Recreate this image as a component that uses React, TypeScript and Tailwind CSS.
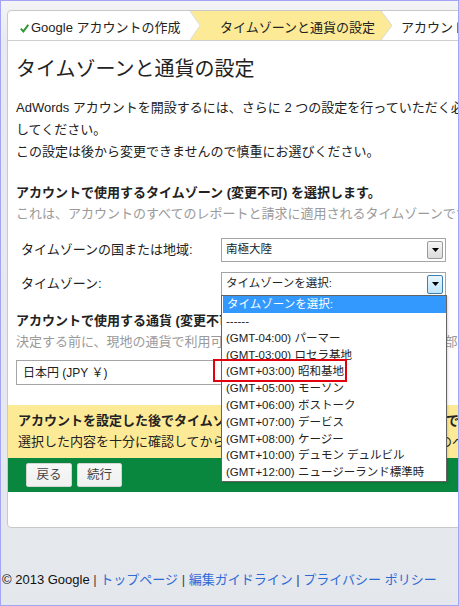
import React from "react";

function Arrow({ active }: { active?: boolean }) {
  return (
    <div
      className={
        active
          ? "w-[16px] h-[19px] flex items-center justify-center border border-[#3c7fb1] rounded-[2px] bg-[linear-gradient(#eaf6fd,#bee6fd)]"
          : "w-[16px] h-[18px] flex items-center justify-center border border-[#9a9a9a] rounded-[2px] bg-[linear-gradient(#f6f6f6,#dcdcdc)]"
      }
    >
      <svg width="7" height="4" viewBox="0 0 7 4">
        <polygon points="0,0 7,0 3.5,4" fill="#000" />
      </svg>
    </div>
  );
}

function Select({ text, active }: { text: string; active?: boolean }) {
  return (
    <div className="w-[225px] h-[24px] border border-[#a5a5a5] bg-white flex items-center justify-between pl-[4px] pr-[2px] text-[11.5px] text-[#222]">
      <span>{text}</span>
      <Arrow active={active} />
    </div>
  );
}

export default function App() {
  const items = [
    "------",
    "(GMT-04:00) パーマー",
    "(GMT-03:00) ロセラ基地",
    "(GMT+03:00) 昭和基地",
    "(GMT+05:00) モーソン",
    "(GMT+06:00) ボストーク",
    "(GMT+07:00) デービス",
    "(GMT+08:00) ケージー",
    "(GMT+10:00) デュモン デュルビル",
    "(GMT+12:00) ニュージーランド標準時",
  ];
  return (
    <div className="relative w-[459px] h-[606px] overflow-hidden border border-[#a4a4f4] bg-[linear-gradient(180deg,#f4f4f6_0px,#e7eaee_40px,#e4e7ec_100%)] font-['Liberation_Sans','Noto_Sans_CJK_JP',sans-serif] text-[#222]">
      <div className="ml-[6px] mt-[9px] w-[640px] h-[518px] bg-white border border-[#c9c9c9] rounded-[4px] overflow-hidden">
        {/* breadcrumb */}
        <div className="flex h-[30px] border-b border-[#cfcfcf] text-[13px] leading-[20px] whitespace-nowrap">
          <div className="w-[182px] pl-[12px] pt-[7px] flex items-start">
            <svg width="9" height="9" viewBox="0 0 9 9" className="mt-[6px] mr-[2px]">
              <path d="M0.8 4.6 L3.4 7.4 L8.3 0.8" stroke="#2c9a33" strokeWidth="2" fill="none" />
            </svg>
            <span>Google アカウントの作成</span>
          </div>
          <div className="relative w-[202px] h-[29px]">
            <svg width="202" height="29" viewBox="0 0 202 29" className="absolute left-0 top-0">
              <polygon points="0,0 191,0 202,14.5 191,29 0,29 10,14.5" fill="#fdea96" />
              <polyline points="0,0 10,14.5 0,29" stroke="#dcdcdc" strokeWidth="1" fill="none" />
              <polyline points="191,0 202,14.5 191,29" stroke="#d8d8d8" strokeWidth="1" fill="none" />
            </svg>
            <div className="relative pl-[30px] pt-[7px]">タイムゾーンと通貨の設定</div>
          </div>
          <div className="pl-[9px] pt-[7px]">アカウントの有効化</div>
        </div>

        {/* content */}
        <div className="px-[8px] whitespace-nowrap">
          <div className="mt-[14px] text-[20px] leading-[28px]">タイムゾーンと通貨の設定</div>
          <div className="mt-[14px] text-[13px] leading-[22px]">
            AdWords アカウントを開設するには、さらに 2 つの設定を行っていただく必要があります。以下の設定を完了
            <br />
            してください。
            <br />
            この設定は後から変更できませんので慎重にお選びください。
          </div>
          <div className="mt-[19px] text-[13px] leading-[21px] font-bold">
            アカウントで使用するタイムゾーン (変更不可) を選択します。
          </div>
          <div className="text-[13px] leading-[21px] text-[#9a9a9a]">
            これは、アカウントのすべてのレポートと請求に適用されるタイムゾーンです。
          </div>
          <div className="mt-[14px] flex items-center text-[13px]">
            <div className="w-[205px] shrink-0 pl-[5px]">タイムゾーンの国または地域:</div>
            <Select text="南極大陸" />
          </div>
          <div className="mt-[10px] flex items-center text-[13px]">
            <div className="w-[205px] shrink-0 pl-[5px]">タイムゾーン:</div>
            <Select text="タイムゾーンを選択:" active />
          </div>
          <div className="mt-[14px] text-[13px] leading-[21px] font-bold">
            アカウントで使用する通貨 (変更不可) を選択します。
          </div>
          <div className="text-[13px] leading-[21px] text-[#9a9a9a]">
            決定する前に、現地の通貨で利用可能なお支払方法をご確認ください。一部の通貨はご利用いただけません。
          </div>
          <div className="mt-[8px] w-[300px] h-[25px] border border-[#a5a5a5] flex items-center pl-[6px] text-[12px]">
            日本円 (JPY ￥)
          </div>
        </div>

        {/* warning band */}
        <div className="mt-[20px] h-[53px] bg-[#fdea96] pl-[10px] pt-[5px] text-[13px] leading-[21px] whitespace-nowrap">
          <div className="font-bold">アカウントを設定した後でタイムゾーンと通貨の各設定を変更することはできません。</div>
          <div>選択した内容を十分に確認してから、「続行」ボタンをクリックして、次のページへ進んでください。</div>
        </div>

        {/* action band */}
        <div className="h-[34px] bg-[#0a873f] pl-[18px] pt-[5px] flex gap-[5px]">
          <button className="w-[46px] h-[24px] rounded-[2px] border border-[#d4d4d4] bg-[linear-gradient(#f7f7f7,#f0f0f0)] text-[12.5px] text-[#444]">
            戻る
          </button>
          <button className="w-[45px] h-[24px] rounded-[2px] border border-[#d4d4d4] bg-[linear-gradient(#f7f7f7,#f0f0f0)] text-[12.5px] text-[#444]">
            続行
          </button>
        </div>
      </div>

      {/* footer */}
      <div className="mt-[42px] pl-[1px] text-[13px] leading-[20px] whitespace-nowrap">
        <span className="text-[#111]">© 2013 Google </span>
        <span className="text-[#444]">|</span>{" "}
        <a className="text-[#2d6ad6]">トップページ</a> <span className="text-[#444]">|</span>{" "}
        <a className="text-[#2d6ad6]">編集ガイドライン</a> <span className="text-[#444]">|</span>{" "}
        <a className="text-[#2d6ad6]">プライバシー ポリシー</a>
      </div>

      {/* open dropdown list */}
      <div className="absolute left-[220px] top-[294px] w-[226px] border border-[#646464] bg-white text-[11.5px] whitespace-nowrap shadow-[1px_1px_2px_rgba(0,0,0,0.15)]">
        <div className="h-[17px] leading-[17px] bg-[#3399ff] text-white pl-[4px] ml-[1px]">タイムゾーンを選択:</div>
        {items.map((t) => (
          <div key={t} className="h-[16.8px] leading-[16.8px] pl-[4px] text-[#222]">
            {t}
          </div>
        ))}
      </div>

      {/* red highlight */}
      <div className="absolute left-[212px] top-[358px] w-[134px] h-[23px] border-2 border-[#e3000f]" />
    </div>
  );
}
